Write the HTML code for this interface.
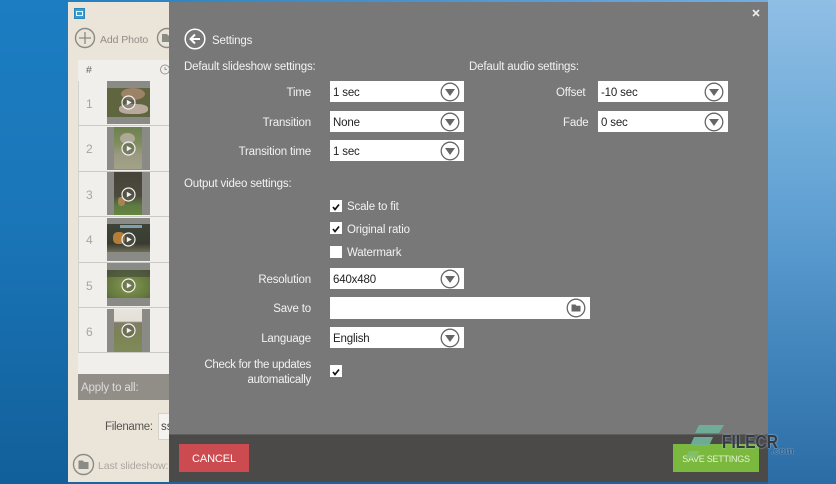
<!DOCTYPE html>
<html><head><meta charset="utf-8"><style>
*{box-sizing:border-box}
html,body{margin:0;padding:0}
body{width:836px;height:484px;overflow:hidden;position:relative;font-family:"Liberation Sans",sans-serif;background:#1a6ba8}
.a{position:absolute;white-space:nowrap}
.l{position:absolute;white-space:nowrap;color:#f2f2f2;font-size:11.5px;line-height:16px;letter-spacing:-.17px}
.r{text-align:right;right:525px}
.s{position:absolute;background:#fff;height:21px;color:#222;font-size:11.5px;line-height:24px;padding-left:3px;letter-spacing:-.17px}
.s svg{position:absolute;top:0;right:3px}
.c{position:absolute;width:12px;height:12px;background:#fff}
.n{position:absolute;left:86px;font-size:12px;line-height:14px;color:#a5a5a2}
.row{position:absolute;left:78px;width:91px;background:#f1efec;border-bottom:1px solid #c9c9c5}
.th{position:absolute;left:107px;width:43px;height:43px;background:#8a8a86;overflow:hidden}
.th i{position:absolute;display:block}
.p{position:absolute;left:121px;width:15px;height:15px}
</style></head><body>
<div class="a" style="inset:0;background:linear-gradient(90deg,#1d7cbc 0,#4a93cf 50%,#7eb3df 100%)"></div>
<div class="a" style="left:0;top:0;width:68px;height:484px;background:linear-gradient(180deg,#1c7dc2 0,#1a76b8 45%,#125f9a 100%)"></div>
<div class="a" style="left:768px;top:0;width:68px;height:484px;background:linear-gradient(180deg,#90bee5 0,#6eabd9 30%,#5a9bcf 50%,#4286bd 72%,#2c6ca5 100%)"></div>
<div class="a" style="left:68px;top:482px;width:700px;height:2px;background:#1a659f"></div>

<!-- left app -->
<div class="a" style="left:68px;top:2px;width:101px;height:480px;background:#ebe4d8"></div>
<div class="a" style="left:74px;top:8px;width:11px;height:11px;background:#3d9bd0;border:1px solid #2a86bd"><div style="position:absolute;left:1px;top:2px;width:7px;height:5px;border:1px solid #dff"></div></div>
<svg class="a" style="left:74px;top:27px" width="24" height="24"><circle cx="11" cy="11" r="9.5" fill="none" stroke="#8b8b85" stroke-width="1.4"/><path d="M11 5V17M5 11H17" stroke="#8b8b85" stroke-width="1.3"/></svg>
<div class="a" style="left:100px;top:33px;font-size:10.5px;color:#918e88;line-height:14px;letter-spacing:-.1px">Add Photo</div>
<svg class="a" style="left:156px;top:27px" width="14" height="24"><circle cx="11" cy="11" r="9.5" fill="none" stroke="#8b8b85" stroke-width="1.4"/><path d="M6 7H11L12 8.500H16V15H6Z" fill="#8b8b85"/></svg>
<div class="a" style="left:78px;top:60px;width:91px;height:21px;background:#f1efeb"></div>
<div class="a" style="left:86px;top:64px;font-size:10.5px;color:#666;line-height:13px">#</div>
<svg class="a" style="left:159px;top:63px" width="10" height="13"><circle cx="6" cy="6.500" r="4.500" fill="none" stroke="#999" stroke-width="1"/><path d="M6 4V6.500H8" fill="none" stroke="#999"/></svg>

<div class="row" style="top:81px;height:45px"></div>
<div class="row" style="top:126px;height:46px"></div>
<div class="row" style="top:172px;height:45px"></div>
<div class="row" style="top:217px;height:46px"></div>
<div class="row" style="top:263px;height:45px"></div>
<div class="row" style="top:308px;height:45px"></div>
<div class="a" style="left:78px;top:81px;height:272px;width:1px;background:#d2d2ce"></div>
<div class="a" style="left:78px;top:353px;width:91px;height:21px;background:#f1efec"></div>

<div class="n" style="top:97px">1</div><div class="n" style="top:142px">2</div><div class="n" style="top:188px">3</div><div class="n" style="top:233px">4</div><div class="n" style="top:279px">5</div><div class="n" style="top:325px">6</div>

<div class="th" style="top:81px">
<i style="left:0;top:7px;width:43px;height:29px;background:#5f653e"></i>
<i style="left:14px;top:7px;width:24px;height:12px;background:#9c8266;border-radius:50%"></i>
<i style="left:12px;top:23px;width:29px;height:10px;background:#b9a89c;border-radius:40%"></i>
</div>
<div class="th" style="top:127px">
<i style="left:7px;top:0;width:28px;height:42px;background:linear-gradient(180deg,#6f8050,#7f8e5c 40%,#9a9a80 65%,#a3a288 100%)"></i>
<i style="left:13px;top:6px;width:15px;height:11px;background:#aea996;border-radius:50%"></i>
</div>
<div class="th" style="top:172px">
<i style="left:7px;top:0;width:28px;height:43px;background:linear-gradient(180deg,#46443a,#4c4a3c 55%,#5f7a42 78%,#64873f)"></i>
<i style="left:11px;top:25px;width:7px;height:9px;background:#a68450;border-radius:40%"></i>
</div>
<div class="th" style="top:218px">
<i style="left:0;top:6px;width:43px;height:28px;background:linear-gradient(180deg,#3e4438,#3a3c30 70%,#6e6c58)"></i>
<i style="left:6px;top:14px;width:12px;height:12px;background:#b47e38;border-radius:40%"></i>
<i style="left:13px;top:7px;width:22px;height:3px;background:#7f9eb0"></i>
</div>
<div class="th" style="top:263px">
<i style="left:0;top:7px;width:43px;height:28px;background:radial-gradient(ellipse at 50% 55%,#85994f,#65783f 70%,#555f3a)"></i>
<i style="left:0;top:7px;width:43px;height:7px;background:#41463a;opacity:.6"></i>
</div>
<div class="th" style="top:309px">
<i style="left:7px;top:0;width:28px;height:43px;background:linear-gradient(180deg,#e8e4dc 0,#e4e0d8 28%,#7f7d66 32%,#7d8256 60%,#7e8a58)"></i>
</div>

<svg class="p" style="top:95px" viewBox="0 0 15 15"><circle cx="7.500" cy="7.500" r="6.500" fill="rgba(90,90,80,.45)" stroke="#f2f2f2" stroke-width="1.200"/><path d="M5.800 4.800L10.800 7.500L5.800 10.200Z" fill="#f2f2f2"/></svg>
<svg class="p" style="top:141px" viewBox="0 0 15 15"><circle cx="7.500" cy="7.500" r="6.500" fill="rgba(90,90,80,.45)" stroke="#f2f2f2" stroke-width="1.200"/><path d="M5.800 4.800L10.800 7.500L5.800 10.200Z" fill="#f2f2f2"/></svg>
<svg class="p" style="top:187px" viewBox="0 0 15 15"><circle cx="7.500" cy="7.500" r="6.500" fill="rgba(90,90,80,.45)" stroke="#f2f2f2" stroke-width="1.200"/><path d="M5.800 4.800L10.800 7.500L5.800 10.200Z" fill="#f2f2f2"/></svg>
<svg class="p" style="top:232px" viewBox="0 0 15 15"><circle cx="7.500" cy="7.500" r="6.500" fill="rgba(90,90,80,.45)" stroke="#f2f2f2" stroke-width="1.200"/><path d="M5.800 4.800L10.800 7.500L5.800 10.200Z" fill="#f2f2f2"/></svg>
<svg class="p" style="top:278px" viewBox="0 0 15 15"><circle cx="7.500" cy="7.500" r="6.500" fill="rgba(90,90,80,.45)" stroke="#f2f2f2" stroke-width="1.200"/><path d="M5.800 4.800L10.800 7.500L5.800 10.200Z" fill="#f2f2f2"/></svg>
<svg class="p" style="top:323px" viewBox="0 0 15 15"><circle cx="7.500" cy="7.500" r="6.500" fill="rgba(90,90,80,.45)" stroke="#f2f2f2" stroke-width="1.200"/><path d="M5.800 4.800L10.800 7.500L5.800 10.200Z" fill="#f2f2f2"/></svg>

<div class="a" style="left:78px;top:374px;width:91px;height:26px;background:#918d87"></div>
<div class="a" style="left:81px;top:381px;font-size:11.5px;color:#ddd;line-height:15px;letter-spacing:-.15px">Apply to all:</div>
<div class="a" style="left:105px;top:420px;font-size:11.5px;color:#555;line-height:15px;letter-spacing:-.3px">Filename:</div>
<div class="a" style="left:158px;top:413px;width:11px;height:27px;background:#f4f3f0;border:1px solid #d4d2cc;border-right:0;font-size:11.5px;line-height:27px;color:#444;padding-left:2px;overflow:hidden">ss</div>
<svg class="a" style="left:72px;top:453px" width="23" height="23"><circle cx="11.500" cy="11.500" r="10" fill="none" stroke="#8b8b85" stroke-width="1.400"/><path d="M6.500 7.500H11L12 9H16.500V16H6.500Z" fill="#8b8b85"/></svg>
<div class="a" style="left:98px;top:459px;width:71px;overflow:hidden;font-size:10.5px;color:#aaa7a1;line-height:14px;letter-spacing:-.1px">Last slideshow: C</div>

<!-- overlay -->
<div class="a" style="left:169px;top:2px;width:599px;height:432px;background:#787878"></div>
<div class="a" style="left:169px;top:434px;width:599px;height:48px;background:#4b4a49;border-top:1px solid #5e5e5e"></div>
<svg class="a" style="left:752px;top:9px" width="8" height="8"><path d="M1 1L7 7M7 1L1 7" stroke="#eee" stroke-width="1.600"/></svg>

<svg class="a" style="left:184px;top:28px" width="22" height="22"><circle cx="11" cy="11" r="9.800" fill="none" stroke="#fff" stroke-width="1.500"/><path d="M16 11H7M11 6.500L6.500 11L11 15.500" fill="none" stroke="#fff" stroke-width="2"/></svg>
<div class="l" style="left:212px;top:33px">Settings</div>
<div class="l" style="left:184px;top:59px">Default slideshow settings:</div>
<div class="l" style="left:469px;top:59px">Default audio settings:</div>

<div class="l r" style="top:85px">Time</div>
<div class="l r" style="top:115px">Transition</div>
<div class="l r" style="top:144px">Transition time</div>
<div class="l" style="left:184px;top:176px">Output video settings:</div>
<div class="l r" style="top:272px">Resolution</div>
<div class="l r" style="top:301px">Save to</div>
<div class="l r" style="top:331px">Language</div>
<div class="l r" style="top:357px;letter-spacing:-.28px">Check for the updates</div>
<div class="l r" style="top:372px;letter-spacing:-.28px">automatically</div>
<div class="l" style="left:556px;top:85px">Offset</div>
<div class="l" style="left:563px;top:115px">Fade</div>

<div class="s" style="left:330px;top:81px;width:134px">1 sec<svg width="21" height="21"><circle cx="10" cy="11" r="8.800" fill="none" stroke="#666" stroke-width="1.300"/><path d="M5 8H15L10 15Z" fill="#666"/></svg></div>
<div class="s" style="left:330px;top:111px;width:134px">None<svg width="21" height="21"><circle cx="10" cy="11" r="8.800" fill="none" stroke="#666" stroke-width="1.300"/><path d="M5 8H15L10 15Z" fill="#666"/></svg></div>
<div class="s" style="left:330px;top:140px;width:134px">1 sec<svg width="21" height="21"><circle cx="10" cy="11" r="8.800" fill="none" stroke="#666" stroke-width="1.300"/><path d="M5 8H15L10 15Z" fill="#666"/></svg></div>
<div class="s" style="left:598px;top:81px;width:130px">-10 sec<svg width="21" height="21"><circle cx="10" cy="11" r="8.800" fill="none" stroke="#666" stroke-width="1.300"/><path d="M5 8H15L10 15Z" fill="#666"/></svg></div>
<div class="s" style="left:598px;top:111px;width:130px">0 sec<svg width="21" height="21"><circle cx="10" cy="11" r="8.800" fill="none" stroke="#666" stroke-width="1.300"/><path d="M5 8H15L10 15Z" fill="#666"/></svg></div>
<div class="s" style="left:330px;top:268px;width:134px">640x480<svg width="21" height="21"><circle cx="10" cy="11" r="8.800" fill="none" stroke="#666" stroke-width="1.300"/><path d="M5 8H15L10 15Z" fill="#666"/></svg></div>
<div class="s" style="left:330px;top:297px;width:260px;height:22px"><svg width="21" height="21"><circle cx="10" cy="11" r="8.800" fill="none" stroke="#666" stroke-width="1.300"/><path d="M5.500 7.500H9.500L10.500 8.800H14.500V14.500H5.500Z" fill="#666"/></svg></div>
<div class="s" style="left:330px;top:327px;width:134px">English<svg width="21" height="21"><circle cx="10" cy="11" r="8.800" fill="none" stroke="#666" stroke-width="1.300"/><path d="M5 8H15L10 15Z" fill="#666"/></svg></div>

<div class="c" style="left:330px;top:200px"><svg width="12" height="12"><path d="M3 6L5 8.500L9 3.500" fill="none" stroke="#111" stroke-width="1.700"/></svg></div>
<div class="c" style="left:330px;top:222px"><svg width="12" height="12"><path d="M3 6L5 8.500L9 3.500" fill="none" stroke="#111" stroke-width="1.700"/></svg></div>
<div class="c" style="left:330px;top:246px"></div>
<div class="c" style="left:330px;top:365px"><svg width="12" height="12"><path d="M3 6L5 8.500L9 3.500" fill="none" stroke="#111" stroke-width="1.700"/></svg></div>
<div class="l" style="left:347px;top:199px">Scale to fit</div>
<div class="l" style="left:347px;top:222px">Original ratio</div>
<div class="l" style="left:347px;top:245px">Watermark</div>

<div class="a" style="left:179px;top:444px;width:70px;height:28px;background:#cb4b50;color:#fff;font-size:11px;line-height:30px;text-align:center;letter-spacing:-.1px">CANCEL</div>
<div class="a" style="left:673px;top:444px;width:86px;height:28px;background:#7ab83e;color:#e4f2d2;font-size:9px;line-height:30px;text-align:center;letter-spacing:-.25px">SAVE SETTINGS</div>

<!-- watermark -->
<svg class="a" style="left:684px;top:424px" width="42" height="36"><path d="M15 1H40L35 9H11Z" fill="#6fb09a" opacity=".95"/><path d="M10 13H29L25 22H6Z" fill="#6fb09a" opacity=".95"/><path d="M5 27H16L11 34H1Z" fill="#84c070" opacity=".85"/></svg>
<div class="a" style="left:722px;top:432px;font-size:18px;font-weight:bold;color:#333a42;line-height:20px;transform:scaleX(.86);transform-origin:0 0;text-shadow:0 0 2px #c8d4e0">FILECR</div>
<div class="a" style="left:771px;top:446px;font-size:10px;font-weight:bold;color:#2f5f8a;line-height:12px;letter-spacing:-.2px;text-shadow:0 0 1px #dbe8f2">.com</div>
</body></html>
